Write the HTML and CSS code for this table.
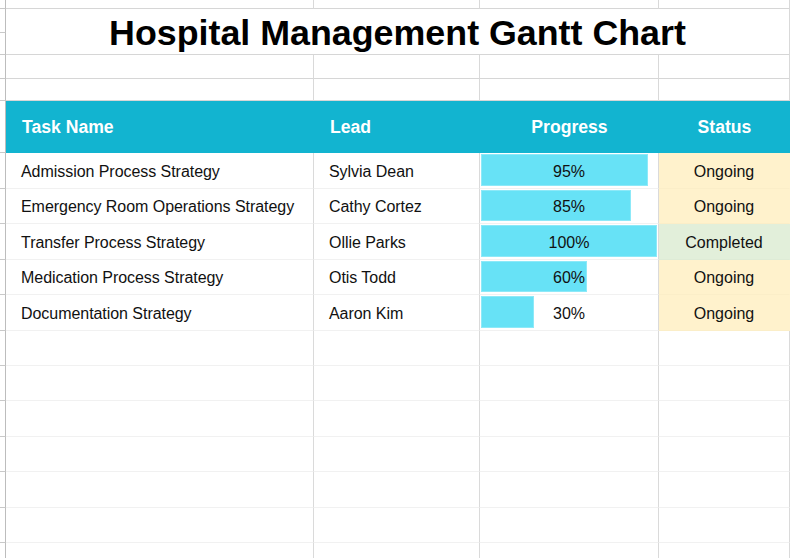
FILE: index.html
```html
<!DOCTYPE html>
<html lang="en">
<head>
<meta charset="utf-8">
<title>Hospital Management Gantt Chart</title>
<link rel="stylesheet" href="styles.css">
</head>
<body>
<div class="sheet">
  <div class="stub"></div><div class="cell top"></div><div class="cell top"></div><div class="cell top"></div><div class="cell top"></div>

  <div class="stub"></div><div class="title">Hospital Management Gantt Chart</div>
  <div class="stub"></div>

  <div class="stub"></div><div class="cell top"></div><div class="cell top"></div><div class="cell top"></div><div class="cell top"></div>
  <div class="stub"></div><div class="cell top"></div><div class="cell top"></div><div class="cell top"></div><div class="cell top"></div>

  <div class="stub"></div>
  <div class="head">Task Name</div>
  <div class="head">Lead</div>
  <div class="head center">Progress</div>
  <div class="head center">Status</div>

  <div class="stub"></div>
  <div class="cell data text">Admission Process Strategy</div>
  <div class="cell data text">Sylvia Dean</div>
  <div class="cell data progress"><div class="bar" style="width:95%"></div><span class="pct">95%</span></div>
  <div class="cell data status ongoing">Ongoing</div>

  <div class="stub"></div>
  <div class="cell data text">Emergency Room Operations Strategy</div>
  <div class="cell data text">Cathy Cortez</div>
  <div class="cell data progress"><div class="bar" style="width:85%"></div><span class="pct">85%</span></div>
  <div class="cell data status ongoing">Ongoing</div>

  <div class="stub"></div>
  <div class="cell data text">Transfer Process Strategy</div>
  <div class="cell data text">Ollie Parks</div>
  <div class="cell data progress"><div class="bar" style="width:100%"></div><span class="pct">100%</span></div>
  <div class="cell data status completed">Completed</div>

  <div class="stub"></div>
  <div class="cell data text">Medication Process Strategy</div>
  <div class="cell data text">Otis Todd</div>
  <div class="cell data progress"><div class="bar" style="width:60%"></div><span class="pct">60%</span></div>
  <div class="cell data status ongoing">Ongoing</div>

  <div class="stub"></div>
  <div class="cell data text">Documentation Strategy</div>
  <div class="cell data text">Aaron Kim</div>
  <div class="cell data progress"><div class="bar" style="width:30%"></div><span class="pct">30%</span></div>
  <div class="cell data status ongoing">Ongoing</div>

  <div class="stub"></div><div class="cell data"></div><div class="cell data"></div><div class="cell data"></div><div class="cell data"></div>
  <div class="stub"></div><div class="cell data"></div><div class="cell data"></div><div class="cell data"></div><div class="cell data"></div>
  <div class="stub"></div><div class="cell data"></div><div class="cell data"></div><div class="cell data"></div><div class="cell data"></div>
  <div class="stub"></div><div class="cell data"></div><div class="cell data"></div><div class="cell data"></div><div class="cell data"></div>
  <div class="stub"></div><div class="cell data"></div><div class="cell data"></div><div class="cell data"></div><div class="cell data"></div>
  <div class="stub"></div><div class="cell data"></div><div class="cell data"></div><div class="cell data"></div><div class="cell data"></div>
  <div class="stub"></div><div class="cell data"></div><div class="cell data"></div><div class="cell data"></div><div class="cell data"></div>
</div>
</body>
</html>
```

FILE: styles.css
```css
* {
  box-sizing: border-box;
}

html, body {
  margin: 0;
  padding: 0;
  background: #ffffff;
}

body {
  font-family: "Liberation Sans", Arial, sans-serif;
  color: #111111;
}

.sheet {
  width: 790px;
  height: 558px;
  overflow: hidden;
  display: grid;
  grid-template-columns: 6px 308px 166px 179px 131px;
  grid-template-rows: 9px 24px 22px 24px 22px 52px 36px 35px 36px 35px 36px 35px 35px 36px 35px 36px 35px 35px;
}

.stub {
  grid-column: 1;
  border-right: 1px solid #bdbdbd;
  border-bottom: 1px solid #c9c9c9;
}

.cell {
  border-right: 1px solid #d9d9d9;
}

.cell.top {
  border-bottom: 1px solid #d6d6d6;
}

.title {
  grid-column: 2 / span 4;
  grid-row: span 2;
  border-right: 1px solid #d9d9d9;
  border-bottom: 1px solid #d6d6d6;
  display: flex;
  align-items: center;
  justify-content: center;
  font-weight: bold;
  font-size: 35.8px;
  color: #000000;
  padding-top: 3px;
  white-space: nowrap;
}

.head {
  background: #12b4d0;
  color: #ffffff;
  font-weight: bold;
  font-size: 17.6px;
  display: flex;
  align-items: center;
  padding-left: 16px;
  padding-top: 1px;
}

.head.center {
  justify-content: center;
  padding-left: 0;
}

.cell.data {
  border-right-color: #dadada;
  border-bottom: 1px solid #f1f1f1;
  font-size: 16px;
}

.text {
  display: flex;
  align-items: center;
  padding-left: 15px;
  padding-top: 2px;
  white-space: nowrap;
  letter-spacing: -0.05px;
}

.progress {
  display: grid;
  padding: 1px 1px 2px 1px;
}

.bar {
  grid-area: 1 / 1;
  justify-self: start;
  height: 100%;
  background: #67e2f6;
  box-shadow: inset 0 0 0 1px #8de9f8;
}

.pct {
  grid-area: 1 / 1;
  align-self: center;
  justify-self: center;
  padding-top: 3px;
}

.status {
  display: flex;
  align-items: center;
  justify-content: center;
  padding-top: 2px;
}

.cell.status.ongoing {
  background: #fff2cc;
  border-right-color: #fff2cc;
  border-bottom-color: #fbeec8;
}

.cell.status.completed {
  background: #e2efda;
  border-right-color: #e2efda;
  border-bottom-color: #deebd6;
}
```
